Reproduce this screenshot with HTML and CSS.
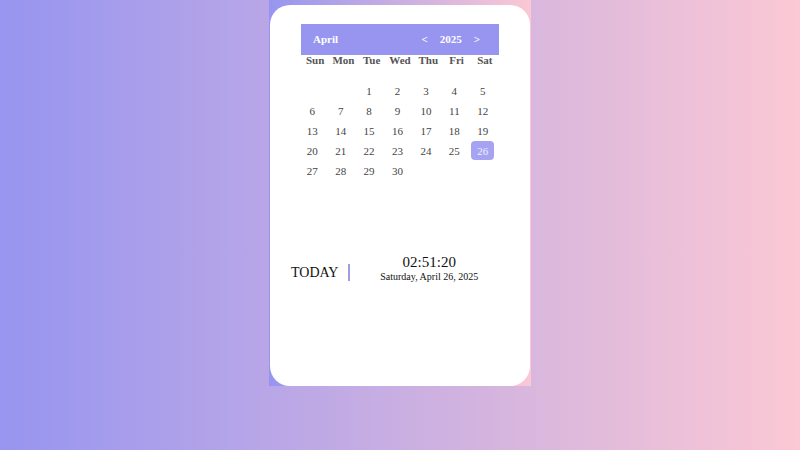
FILE: index.html
```html
<!DOCTYPE html>
<html lang="en">
<head>
<meta charset="utf-8">
<title>Calendar</title>
<link rel="stylesheet" href="styles.css">
</head>
<body>
<div class="wrap">
  <div class="card">
    <div class="calendar">
      <div class="cal-head">
        <span class="month">April</span>
        <div class="year-nav">
          <span class="nav">&lt;</span>
          <span class="year">2025</span>
          <span class="nav">&gt;</span>
        </div>
      </div>
      <div class="weekdays">
        <span>Sun</span><span>Mon</span><span>Tue</span><span>Wed</span><span>Thu</span><span>Fri</span><span>Sat</span>
      </div>
      <div class="days">
        <span></span><span></span>
        <span><i>1</i></span><span><i>2</i></span><span><i>3</i></span><span><i>4</i></span><span><i>5</i></span>
        <span><i>6</i></span><span><i>7</i></span><span><i>8</i></span><span><i>9</i></span><span><i>10</i></span><span><i>11</i></span><span><i>12</i></span>
        <span><i>13</i></span><span><i>14</i></span><span><i>15</i></span><span><i>16</i></span><span><i>17</i></span><span><i>18</i></span><span><i>19</i></span>
        <span><i>20</i></span><span><i>21</i></span><span><i>22</i></span><span><i>23</i></span><span><i>24</i></span><span><i>25</i></span><span><i class="current">26</i></span>
        <span><i>27</i></span><span><i>28</i></span><span><i>29</i></span><span><i>30</i></span>
      </div>
    </div>
    <div class="today-row">
      <span class="today-label">TODAY</span>
      <span class="divider"></span>
      <div class="clock">
        <div class="time">02:51:20</div>
        <div class="date">Saturday, April 26, 2025</div>
      </div>
    </div>
  </div>
</div>
</body>
</html>
```
FILE: styles.css
```css
html, body {
  margin: 0;
  height: 100%;
}
body {
  background: linear-gradient(to right, #9795f0, #fbc8d4);
  font-family: "Liberation Serif", "Times New Roman", serif;
}
.wrap {
  width: 262px;
  margin: 0 auto;
  padding: 5px 1px 0;
  box-sizing: border-box;
  background: linear-gradient(to right, #9795f0, #fbc8d4);
}
.card {
  height: 381px;
  background: #fff;
  border-radius: 20px;
  padding: 19px 0 0;
  box-sizing: border-box;
}
.calendar {
  width: 198px;
  margin: 0 auto;
}
.cal-head {
  height: 31px;
  background: #9795f0;
  color: #fff;
  font-weight: bold;
  font-size: 11px;
  line-height: 12px;
  display: flex;
  align-items: center;
  justify-content: space-between;
  padding: 0 19px 1px 12px;
  box-sizing: border-box;
}
.year-nav {
  display: flex;
  align-items: center;
  gap: 12px;
}
.weekdays, .days {
  display: grid;
  grid-template-columns: repeat(7, 1fr);
  text-align: center;
}
.weekdays {
  font-weight: bold;
  font-size: 11px;
  color: #555;
  height: 11px;
  line-height: 11px;
}
.days {
  width: 199px;
  margin: 15px 0 0 -3px;
  row-gap: 1px;
  font-size: 11px;
  color: #444;
}
.days span {
  height: 19px;
  display: flex;
  justify-content: center;
}
.days i {
  font-style: normal;
  width: 23px;
  height: 19px;
  line-height: 20px;
  border-radius: 4px;
}
.days i.current {
  background: #a6a4f2;
  color: #eeeeff;
}
.today-row {
  display: flex;
  align-items: flex-start;
  margin-top: 73px;
  padding: 0 22px 0 21px;
}
.today-label {
  font-size: 14px;
  line-height: 17px;
  margin-top: 11px;
  color: #111;
  margin-right: 10px;
}
.divider {
  width: 2px;
  height: 17px;
  margin-top: 11px;
  background: #a09ce0;
}
.clock {
  flex: 1;
  text-align: center;
  color: #111;
}
.time {
  font-size: 15px;
  line-height: 18px;
}
.date {
  font-size: 10px;
  line-height: 11px;
}
```
